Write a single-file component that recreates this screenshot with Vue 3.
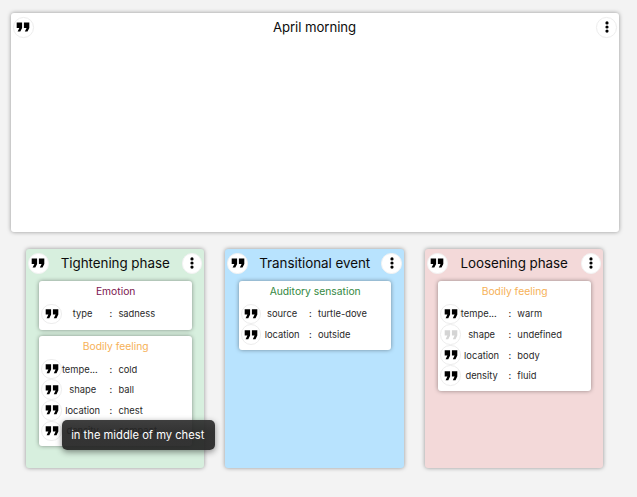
<script setup>
const quote = 'M6 17h3l2-4V7H5v6h3zm8 0h3l2-4V7h-6v6h3z'
const phases = [
  {
    title: 'Tightening phase', tone: 'green',
    cards: [
      { title: 'Emotion', kind: 'emotion', rows: [{ k: 'type', v: 'sadness' }] },
      {
        title: 'Bodily feeling', kind: 'bodily',
        rows: [
          { k: 'temperature', v: 'cold' },
          { k: 'shape', v: 'ball' },
          { k: 'location', v: 'chest', tip: 'in the middle of my chest' },
          { k: 'density', v: 'compact' },
        ],
      },
    ],
  },
  {
    title: 'Transitional event', tone: 'blue',
    cards: [
      {
        title: 'Auditory sensation', kind: 'auditory',
        rows: [{ k: 'source', v: 'turtle-dove' }, { k: 'location', v: 'outside' }],
      },
    ],
  },
  {
    title: 'Loosening phase', tone: 'red',
    cards: [
      {
        title: 'Bodily feeling', kind: 'bodily',
        rows: [
          { k: 'temperature', v: 'warm' },
          { k: 'shape', v: 'undefined', off: true },
          { k: 'location', v: 'body' },
          { k: 'density', v: 'fluid' },
        ],
      },
    ],
  },
]
const label = (k) => (k.length > 8 ? k.slice(0, 5) + '...' : k)
</script>

<template>
  <main class="page">
    <section class="panel">
      <header class="head">
        <button class="round"><svg viewBox=".9 .9 22.2 22.2"><path :d="quote" /></svg></button>
        <h1>April morning</h1>
        <button class="round"><svg viewBox="0 0 20 20"><circle cx="10" cy="5.900" r="1.600" /><circle cx="10" cy="10" r="1.600" /><circle cx="10" cy="14.100" r="1.600" /></svg></button>
      </header>
    </section>
    <div class="phases">
      <section v-for="p in phases" :key="p.title" class="phase" :class="p.tone">
        <header class="head">
          <button class="round"><svg viewBox=".9 .9 22.2 22.2"><path :d="quote" /></svg></button>
          <h2>{{ p.title }}</h2>
          <button class="round"><svg viewBox="0 0 20 20"><circle cx="10" cy="5.900" r="1.600" /><circle cx="10" cy="10" r="1.600" /><circle cx="10" cy="14.100" r="1.600" /></svg></button>
        </header>
        <div class="cards">
          <article v-for="c in p.cards" :key="c.title" class="card">
            <h3 :class="c.kind">{{ c.title }}</h3>
            <div v-for="r in c.rows" :key="r.k" class="row">
              <button class="round" :class="{ off: r.off }"><svg viewBox=".9 1.3 22.2 22.2"><path :d="quote" /></svg></button>
              <span class="key" :class="{ cut: label(r.k) !== r.k }">{{ label(r.k) }}</span>
              <span class="colon">:</span>
              <span class="value">{{ r.v }}</span>
              <div v-if="r.tip" class="tip">{{ r.tip }}</div>
            </div>
          </article>
        </div>
      </section>
    </div>
  </main>
</template>

<style>
body { background: #f3f3f3; }
</style>

<style scoped>
.page {
  box-sizing: border-box;
  width: 637px;
  height: 497px;
  padding: 13px 18px 0 11px;
  background: #f3f3f3;
  font-family: Inter, "Liberation Sans", sans-serif;
  color: #0c0c0c;
  overflow: hidden;
}
.panel {
  box-sizing: border-box;
  height: 219.400px;
  padding: 4px 2px;
  border-radius: 3px;
  background: #fff;
  box-shadow: 0 0 4px rgba(0, 0, 0, .4);
}
.head { display: flex; align-items: center; justify-content: space-between; height: 20.600px; }
h1, h2, h3 { margin: 0; font-weight: 400; white-space: nowrap; }
h1, h2 { height: 20px; font-size: 13.400px; line-height: 20px; }
h1 { margin-top: -.4px; padding-right: 1px; font-size: 13.200px; letter-spacing: -.06px; }
h2 { margin-top: -1px; letter-spacing: -.04px; }
.round {
  flex: none;
  box-sizing: border-box;
  width: 20.600px;
  height: 20.600px;
  padding: 0;
  border: 1px solid #ededed;
  border-radius: 50%;
  background: #fff;
}
.phase .head .round { border-color: #f3f3f3; }
.round svg { display: block; width: 20px; height: 20px; margin: -.7px; fill: #000; }
.round.off svg { fill: #d4d4d4; }
.phases { display: flex; gap: 21.100px; padding: 16.600px 0 0 15px; }
.phase {
  box-sizing: border-box;
  flex: none;
  width: 178.400px;
  height: 219px;
  padding: 4px 2px;
  border-radius: 3px;
  box-shadow: 0 0 4px rgba(0, 0, 0, .4);
}
.green { background: #d7efde; }
.blue { background: #b8e3fe; }
.red { background: #f3d9d9; }
.cards { display: flex; flex-direction: column; gap: 6.500px; padding: 7.400px 10.400px 0 11.300px; }
.card {
  padding: 0 2px 5.300px;
  border-radius: 3px;
  background: #fff;
  box-shadow: 0 0 4px rgba(0, 0, 0, .4);
}
h3 { height: 22.700px; font-size: 10.300px; line-height: 20px; text-align: center; }
.emotion { color: #7b1550; }
.bodily { color: #f6b157; }
.auditory { color: #348842; }
.row { position: relative; display: flex; align-items: center; height: 20.600px; font-size: 9.350px; line-height: 12px; color: #282828; white-space: nowrap; }
.key, .colon, .value { padding-top: 1px; }
.key { width: 41.500px; text-align: center; }
.key.cut { text-align: left; }
.colon { width: 15px; text-align: center; }
.tip {
  position: absolute;
  z-index: 2;
  left: 20.700px;
  top: 20px;
  box-sizing: border-box;
  width: 153.500px;
  height: 30.500px;
  padding-right: 2px;
  border-radius: 5px;
  background: linear-gradient(rgba(46, 46, 46, .92), rgba(34, 34, 34, .92) 40%);
  box-shadow: 0 2px 6px rgba(0, 0, 0, .45);
  color: #fff;
  font-size: 11.200px;
  line-height: 31px;
  text-align: center;
}
</style>
